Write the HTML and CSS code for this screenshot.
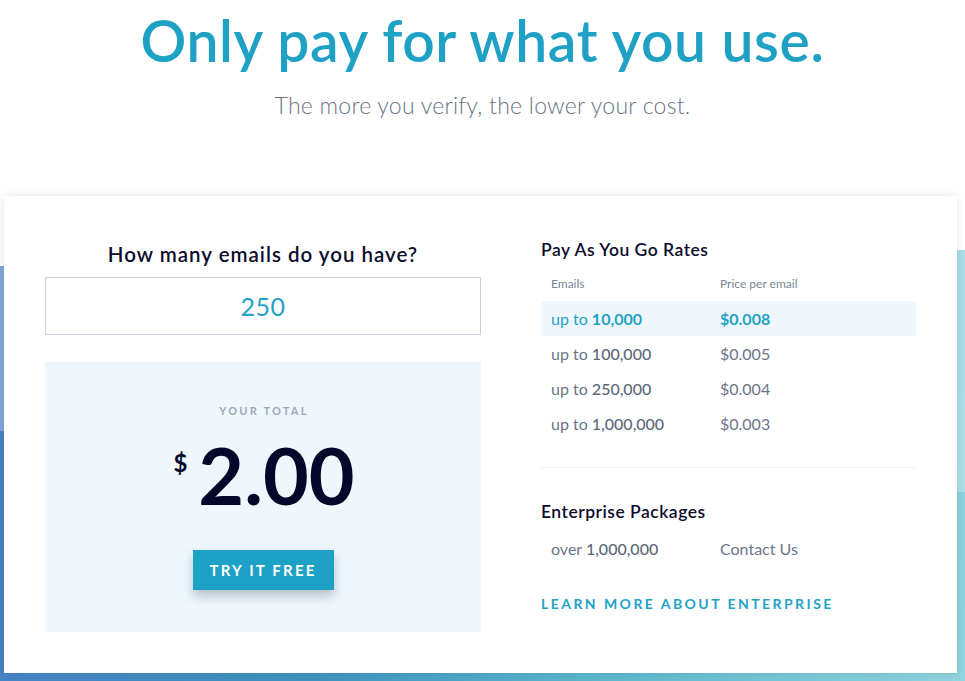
FILE: index.html
```html
<!DOCTYPE html>
<html lang="en">
<head>
<meta charset="utf-8">
<title>Pricing</title>
<link rel="stylesheet" href="styles.css">
</head>
<body>
<div class="page">
  <div class="bg" aria-hidden="true"><div class="bg-light"></div></div>
  <header class="hero">
    <h1 class="title">Only pay for what you use.</h1>
    <p class="subtitle">The more you verify, the lower your cost.</p>
  </header>
  <section class="card">
    <div class="calc">
      <h2 class="calc-q">How many emails do you have?</h2>
      <div class="count-input">250</div>
      <div class="total">
        <div class="total-label">YOUR TOTAL</div>
        <div class="amount"><span class="cur">$</span><span class="num">2.00</span></div>
        <a class="btn" href="#">TRY IT FREE</a>
      </div>
    </div>
    <div class="rates">
      <h3 class="rates-title">Pay As You Go Rates</h3>
      <div class="rate-head"><span class="c1">Emails</span><span class="c2">Price per email</span></div>
      <div class="rate-row active"><span class="c1">up to <b>10,000</b></span><span class="c2"><b>$0.008</b></span></div>
      <div class="rate-row"><span class="c1">up to <em>100,000</em></span><span class="c2">$0.005</span></div>
      <div class="rate-row"><span class="c1">up to <em>250,000</em></span><span class="c2">$0.004</span></div>
      <div class="rate-row"><span class="c1">up to <em>1,000,000</em></span><span class="c2">$0.003</span></div>
      <hr class="sep">
      <h3 class="rates-title ent">Enterprise Packages</h3>
      <div class="rate-row plain"><span class="c1">over <em>1,000,000</em></span><span class="c2">Contact Us</span></div>
      <a class="learn" href="#">LEARN MORE ABOUT ENTERPRISE</a>
    </div>
  </section>
</div>
</body>
</html>
```
FILE: styles.css
```css
* { box-sizing: border-box; }
html, body { margin: 0; padding: 0; }
body {
  font-family: "Lato", "Noto Sans", sans-serif;
  background: #fff;
  width: 965px;
  height: 681px;
  overflow: hidden;
}
.page { position: relative; width: 965px; height: 681px; }
.bg {
  position: absolute;
  left: 0; top: 0; width: 965px; height: 681px;
  background: linear-gradient(100deg, #4a7ec9 0%, #3f93bf 40%, #5bb6cc 65%, #8fd4de 100%);
  clip-path: polygon(0 266px, 965px 250px, 965px 681px, 0 681px);
  z-index: 0;
}
.bg-light {
  position: absolute;
  inset: 0;
  background: rgba(255,255,255,0.3);
  clip-path: polygon(0 266px, 965px 250px, 965px 492px, 0 431px);
}
.hero { position: relative; z-index: 1; text-align: center; padding-top: 6px; }
.title {
  margin: 0;
  font-size: 57px;
  line-height: 68px;
  font-weight: 600;
  color: #1fa1c6;
  letter-spacing: 0.6px;
}
.subtitle {
  margin: 18px 0 0;
  font-size: 23px;
  line-height: 26px;
  font-weight: 300;
  color: #697386;
  letter-spacing: 0.25px;
}
.card {
  position: relative; z-index: 1;
  margin: 78px 8px 0 4px;
  width: 953px;
  height: 477px;
  background: #fff;
  box-shadow: 0 0 8px rgba(40, 50, 70, 0.12);
  padding: 44px 41px 40px;
  display: grid;
  grid-template-columns: 436px 375px;
  column-gap: 60px;
}
.calc { display: flex; flex-direction: column; }
.calc-q {
  margin: 0;
  text-align: center;
  font-size: 20.5px;
  line-height: 28px;
  font-weight: 600;
  letter-spacing: 1px;
  color: #0c0c2c;
}
.count-input {
  margin-top: 9px;
  height: 58px;
  border: 1px solid #c9cfdb;
  display: flex; align-items: center; justify-content: center;
  font-size: 25px;
  color: #23a2c6;
  letter-spacing: 0.5px;
}
.total {
  margin-top: 27px;
  height: 270px;
  background: #eff7fd;
  display: flex; flex-direction: column; align-items: center;
  padding-top: 42px;
}
.total-label {
  font-size: 11px;
  line-height: 14px;
  font-weight: 700;
  letter-spacing: 2.2px;
  color: #9ea9bb;
  padding-left: 2px;
}
.amount {
  margin-top: 17px;
  display: flex; align-items: flex-start;
  color: #06062a;
  padding-left: 2px;
}
.cur { font-size: 24px; line-height: 28px; font-weight: 700; margin-top: 14px; margin-right: 11px; }
.num { font-size: 79px; line-height: 80px; font-weight: 700; letter-spacing: 0; }
.btn {
  margin-top: 35px;
  width: 141px; height: 40px;
  background: #1da1c7;
  color: #fff;
  text-decoration: none;
  font-size: 15px; font-weight: 700;
  letter-spacing: 2.2px;
  display: flex; align-items: center; justify-content: center;
  box-shadow: 0 6px 10px rgba(30, 50, 70, 0.28);
}
.rates { display: flex; flex-direction: column; }
.rates-title {
  margin: 0;
  font-size: 17.5px;
  line-height: 24px;
  font-weight: 600;
  letter-spacing: 0.5px;
  color: #0c0c2c;
  margin-top: -2px;
}
.rate-head {
  margin-top: 13px;
  display: flex;
  font-size: 12px;
  line-height: 18px;
  color: #7a8496;
  margin-bottom: 8px;
}
.c1 { width: 179px; padding-left: 10px; }
.c2 { flex: 1; }
.rate-row {
  display: flex; align-items: center;
  height: 35px;
  font-size: 16px;
  color: #6b7588;
}
.rate-row em { font-style: normal; font-weight: 500; color: #5d677a; }
.rate-row.active { background: #eff7fd; color: #23a2c6; }
.rate-row.active b { font-weight: 700; }
.sep { margin: 26px 0 0; border: 0; border-top: 1px solid #eef0f3; height: 0; }
.rates-title.ent { margin-top: 32px; }
.rate-row.plain { height: 26px; margin-top: 11px; }
.learn {
  margin-top: 34px;
  font-size: 14px; line-height: 18px; font-weight: 700;
  letter-spacing: 2.45px;
  color: #23a2c6;
  text-decoration: none;
}
```
